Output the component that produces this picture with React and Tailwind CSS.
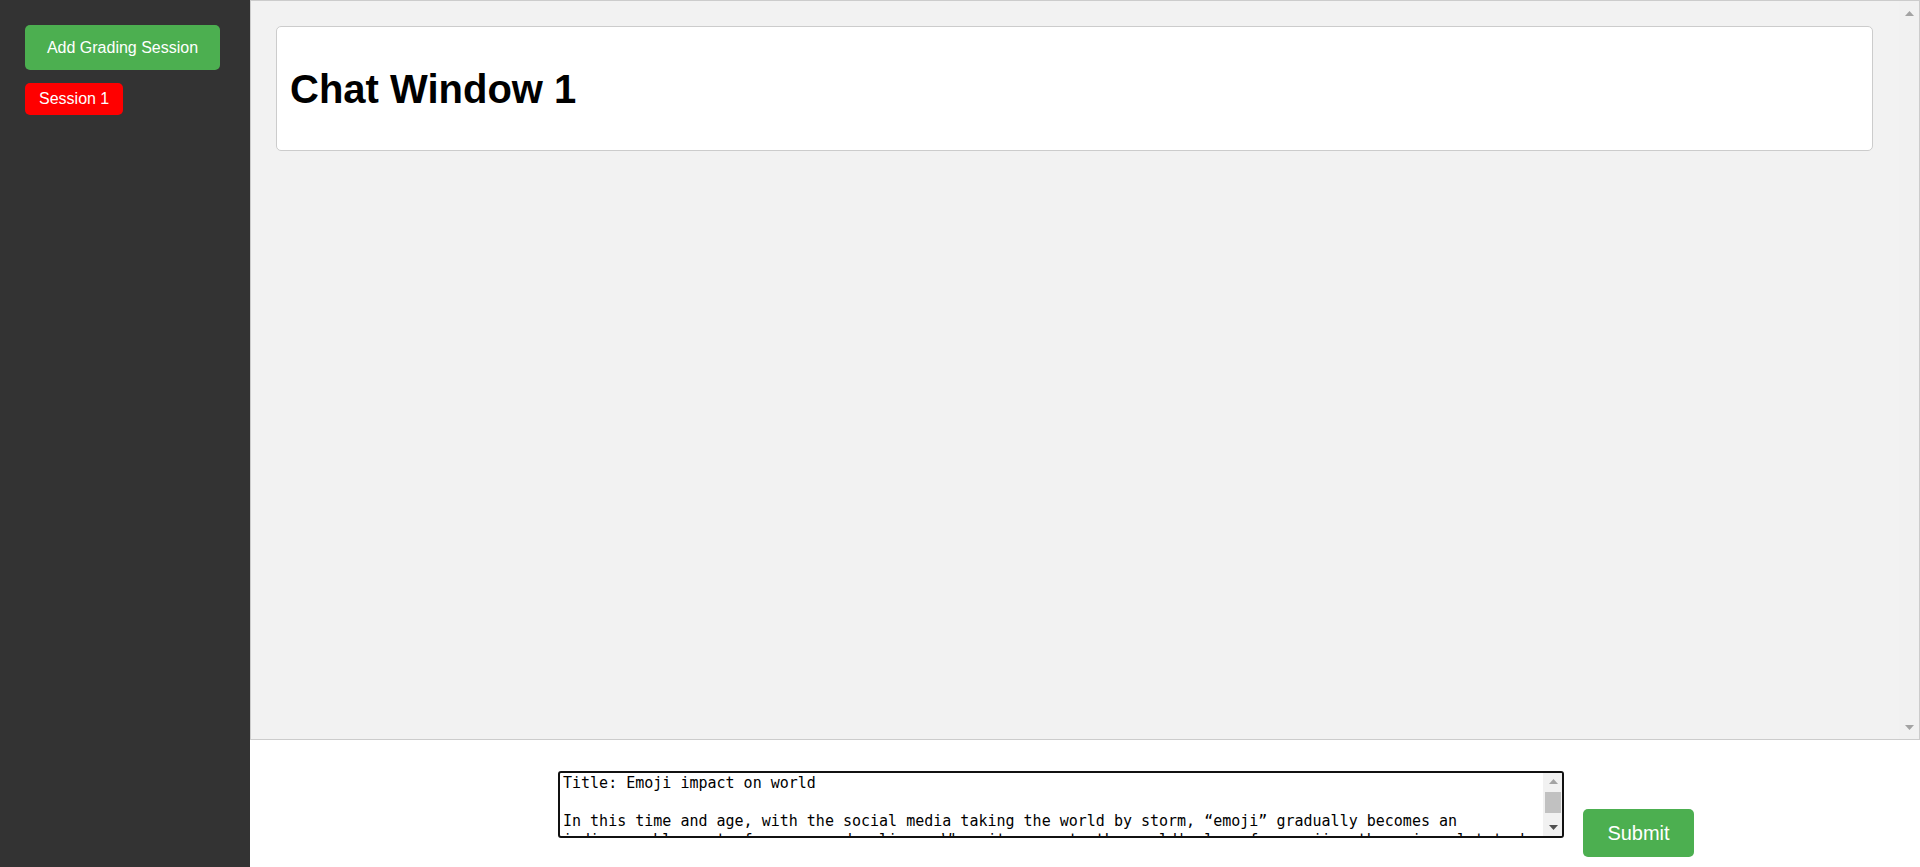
import React, { useState } from 'react';

const essay = `Title: Emoji impact on world

In this time and age, with the social media taking the world by storm, “emoji” gradually becomes an indispensable part of our everyday lives. When it comes to the world's love for emojis, there is a lot to be said about how people talk to each other today.

Emojis are small pictures that show feelings, objects and ideas. They first appeared on Japanese mobile phones in the late 1990s and were later added to the Unicode standard, which made them available on almost every device in the world.

One reason for their success is that they save time. A single smiling face can replace a whole sentence, and a heart can say more than a long message. Another reason is that they add tone to written words, which often sound cold or unclear without them.

However, emojis also have some drawbacks. The same picture may mean different things in different cultures, and too many emojis can make a message hard to read.

In conclusion, emojis have changed the way the world communicates, and they will most likely keep doing so in the years to come.`;

// small scroll arrow triangle
const Arrow = ({ up, color }) => (
    <svg width="9" height="5" viewBox="0 0 9 5">
        <path d={up ? 'M0 5 L4.5 0 L9 5 Z' : 'M0 0 L4.5 5 L9 0 Z'} fill={color} />
    </svg>
);

const App = () => {
    const [sessions, setSessions] = useState(['Session 1']);
    const [text, setText] = useState(essay);

    const addSession = () => {
        setSessions(prev => [...prev, `Session ${prev.length + 1}`]);
    };

    return (
        <div className="flex h-screen w-full font-['Liberation_Sans',Arial,sans-serif]">
            {/* Sidebar */}
            <div className="w-[250px] shrink-0 bg-[#333333] p-[25px] flex flex-col items-start gap-[13px]">
                <button
                    onClick={addSession}
                    className="w-[195px] h-[45px] bg-[#4caf50] text-white text-[16px] rounded-[5px] flex items-center justify-center"
                >
                    Add Grading Session
                </button>
                {sessions.map((s, i) => (
                    <button
                        key={s}
                        className={`h-[32px] px-[14px] text-white text-[16px] rounded-[5px] flex items-center ${i === 0 ? 'bg-[#ff0000]' : 'bg-[#555555]'}`}
                    >
                        {s}
                    </button>
                ))}
            </div>

            {/* Main */}
            <div className="flex-1 flex flex-col min-w-0">
                <div className="h-[740px] shrink-0 border border-[#cccccc] bg-[#f2f2f2] flex">
                    <div className="flex-1 min-w-0 p-[25px] pr-[26px] overflow-hidden">
                        <div className="h-[125px] bg-white border border-[#cccccc] rounded-[5px] flex items-center px-[13px]">
                            <h1 className="text-[40px] font-bold text-black">Chat Window 1</h1>
                        </div>
                    </div>
                    {/* scrollbar */}
                    <div className="w-[20px] shrink-0 bg-[#f1f1f1] flex flex-col items-center justify-between pt-[10px] pb-[9px]">
                        <Arrow up color="#a3a3a3" />
                        <Arrow color="#a3a3a3" />
                    </div>
                </div>

                {/* Input bar */}
                <div className="flex-1 bg-white flex items-start pl-[308px] pt-[31px]">
                    <div className="w-[1006px] h-[67px] border-2 border-[#111111] rounded-[3px] flex overflow-hidden bg-white">
                        <textarea
                            value={text}
                            onChange={e => setText(e.target.value)}
                            className="flex-1 min-w-0 h-full px-[3px] pt-[1px] text-[15px] leading-[19px] text-black resize-none outline-none [scrollbar-width:none] font-['DejaVu_Sans_Mono',monospace]"
                        />
                        <div className="w-[19px] shrink-0 bg-[#f1f1f1] flex flex-col items-center pl-[1px]">
                            <div className="h-[17px] flex items-center justify-center">
                                <Arrow up color="#a3a3a3" />
                            </div>
                            <div className="mt-[2px] w-[16px] h-[21px] bg-[#c1c1c1]" />
                            <div className="flex-1" />
                            <div className="h-[17px] flex items-center justify-center">
                                <Arrow color="#505050" />
                            </div>
                        </div>
                    </div>
                    <button className="ml-[19px] mt-[38px] w-[111px] h-[48px] bg-[#4caf50] text-white text-[20px] rounded-[5px] flex items-center justify-center">
                        Submit
                    </button>
                </div>
            </div>
        </div>
    );
};

export default App;
